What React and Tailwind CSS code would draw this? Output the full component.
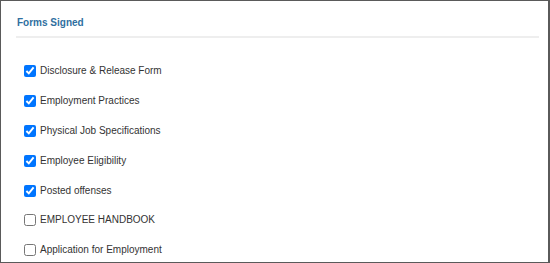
import { useState } from 'react'

const FORMS = [
  { name: 'Disclosure & Release Form', signed: true },
  { name: 'Employment Practices', signed: true },
  { name: 'Physical Job Specifications', signed: true },
  { name: 'Employee Eligibility', signed: true },
  { name: 'Posted offenses', signed: true },
  { name: 'EMPLOYEE HANDBOOK', signed: false },
  { name: 'Application for Employment', signed: false },
]

export default function App() {
  const [forms, setForms] = useState(FORMS)

  function toggle(i) {
    setForms((f) => f.map((x, j) => (j === i ? { ...x, signed: !x.signed } : x)))
  }

  return (
    <div
      className="h-[263px] w-[550px] overflow-hidden border border-r-2 border-[#5a5a5a] bg-white"
      style={{ fontFamily: '"Liberation Sans", Arial, sans-serif' }}
    >
      <div className="pl-[15px] pr-[9px]">
        <h3 className="border-b-2 border-[#eeeeee] pt-[16px] pb-[7px] pl-px text-[10px] leading-[12px] font-bold text-[#2f6f9f]">
          Forms Signed
        </h3>
        <ul className="pt-[18px]">
          {forms.map((f, i) => (
            <li key={f.name} className="flex h-[29.9px] items-center pl-[8px]">
              <input
                id={`form-${i}`}
                type="checkbox"
                checked={f.signed}
                onChange={() => toggle(i)}
                className="m-0 h-[12px] w-[12px] accent-[#0075ff]"
              />
              <label htmlFor={`form-${i}`} className="pl-[4px] text-[10px] leading-[12px] text-[#333333]">
                {f.name}
              </label>
            </li>
          ))}
        </ul>
      </div>
    </div>
  )
}
